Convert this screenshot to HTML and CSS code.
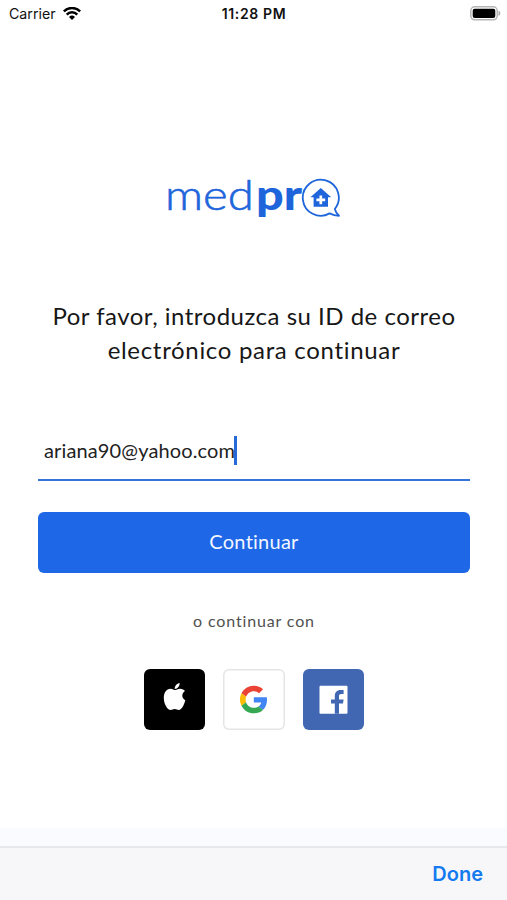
FILE: index.html
```html
<!DOCTYPE html>
<html lang="es">
<head>
<meta charset="utf-8">
<title>medpro</title>
<link rel="stylesheet" href="styles.css">
</head>
<body>
<div class="screen">
  <header class="status">
    <div class="carrier"><span>Carrier</span>
      <svg class="wifi" viewBox="0 0 18 13"><g fill="none" stroke="#000" stroke-width="2.4"><path d="M.8 4.4A11.5 11.5 0 0 1 17.2 4.4"/><path d="M3.7 7.6A7.2 7.2 0 0 1 14.3 7.6"/></g><path d="M6 10A4.3 4.3 0 0 1 12 10L9 13Z"/></svg>
    </div>
    <time class="clock">11:28 PM</time>
    <svg class="battery" viewBox="0 0 31 15"><rect x=".8" y=".8" width="26.4" height="13" rx="4" fill="#fff" stroke="#b5b5b5" stroke-width="1.5"/><rect x="2.7" y="2.7" width="22.6" height="9.2" rx="2"/><path d="M29 5.2Q30.8 7.3 29 9.4Z" fill="#aaa" stroke="#aaa"/></svg>
  </header>
  <main class="login">
    <div class="logo">
      <span class="med">med</span><span class="pr">pr</span>
      <svg class="bubble" viewBox="0 0 40 40"><path d="M33.8 31A18 18 0 1 0 28.6 35.4Q33 37.7 38 37.8Q35 35.3 33.8 31Z" fill="#fff" stroke="#1e65db" stroke-width="1.8" stroke-linejoin="round"/><path d="M19.8 10L30.2 19.3H27V28.8H12.6V19.3H9.4Z" fill="#1e65db"/><path d="M19.8 17.4V26.2M15.4 21.8H24.2" stroke="#fff" stroke-width="2.7"/></svg>
    </div>
    <h1 class="title"><span class="line-one">Por favor, introduzca su ID de correo</span><br><span class="line-two">electrónico para continuar</span></h1>
    <div class="field"><span class="email">ariana90@yahoo.com</span><i class="caret"></i></div>
    <button class="submit">Continuar</button>
    <p class="or">o continuar con</p>
    <div class="social">
      <button class="tile apple" aria-label="Apple"><svg viewBox="0 0 61 61"><path fill="#fff" d="M35.6 14C36 16.8 33.6 19.9 30.7 20C30.4 17.1 33 14.4 35.6 14ZM31 21.1C32.2 21.1 33.8 19.6 36.2 19.7C38.2 19.8 40 20.6 40.9 22C37.4 24.4 37.4 29.2 41.3 31.2C40.2 35.5 37.8 41 34.8 41C33.2 41 32.7 40 30.8 40C28.8 40 28.2 41 26.8 41C23.2 41 19.8 34.6 19.8 28.7C19.8 22.8 23.3 19.7 26.6 19.7C28.6 19.7 30 21.1 31 21.1Z"/></svg></button>
      <button class="tile google" aria-label="Google"><svg viewBox="0 0 61 61"><g transform="translate(17 16.7) scale(.575)"><path fill="#EA4335" d="M24 9.5c3.54 0 6.71 1.22 9.21 3.6l6.85-6.85C35.9 2.38 30.47 0 24 0 14.62 0 6.51 5.38 2.56 13.22l7.98 6.19C12.43 13.72 17.74 9.5 24 9.5z"/><path fill="#4285F4" d="M46.98 24.55c0-1.57-.15-3.09-.38-4.55H24v9.02h12.94c-.58 2.96-2.26 5.48-4.78 7.18l7.73 6c4.51-4.18 7.09-10.36 7.09-17.65z"/><path fill="#FBBC05" d="M10.53 28.59c-.48-1.45-.76-2.99-.76-4.59s.27-3.14.76-4.59l-7.98-6.19C.92 16.46 0 20.12 0 24c0 3.88.92 7.54 2.56 10.78l7.97-6.19z"/><path fill="#34A853" d="M24 48c6.48 0 11.93-2.13 15.89-5.81l-7.73-6c-2.15 1.45-4.92 2.3-8.16 2.3-6.26 0-11.57-4.22-13.47-9.91l-7.98 6.19C6.51 42.62 14.62 48 24 48z"/></g></svg></button>
      <button class="tile facebook" aria-label="Facebook"><svg viewBox="0 0 61 61"><rect x="16.5" y="16.7" width="28" height="28" rx="1" fill="#fff"/><path fill="#4267b2" d="M31.8 44.7V34.6H28V30.4H31.8V27.2C31.8 23.4 33.8 21.1 37.6 21.1H40.6V25H38.4C36.6 25 36 25.8 36 27.4V30.4H40.6L40 34.6H36V44.7Z"/></svg></button>
    </div>
  </main>
  <div class="haze"></div>
  <footer class="toolbar"><button class="done">Done</button></footer>
</div>
</body>
</html>
```
FILE: styles.css
```css
* { box-sizing: border-box; }
body { margin: 0; background: #fff; }
button { border: 0; padding: 0; background: none; font: inherit; }
.screen { width: 507px; height: 900px; display: flex; flex-direction: column; overflow: hidden; font-family: Lato, sans-serif; }
.status { height: 28px; padding: 1px 6px 1px 9px; display: grid; grid-template-columns: 1fr auto 1fr; align-items: center; font: 14px/26px Inter, sans-serif; color: #111; }
.carrier { display: flex; align-items: center; gap: 7px; font-size: 14.2px; }
.wifi { width: 18px; height: 13px; margin-top: -2px; }
.clock { font-weight: 600; font-size: 14px; letter-spacing: .65px; margin-right: 2px; }
.battery { width: 31px; height: 15px; justify-self: end; margin-top: -1px; }
.login { flex: 1; padding: 0 37px 0 38px; }
.logo { height: 50px; margin-top: 142px; display: flex; align-items: baseline; padding-left: 127px; color: #1e65db; font-size: 41.5px; line-height: 48px; }
.med { font-weight: 300; width: 91px; transform: scaleX(1.14); transform-origin: left; -webkit-text-stroke: .6px #1e65db; }
.pr { font-weight: 900; width: 45px; transform: scaleX(1.17); transform-origin: left; }
.bubble { width: 40px; height: 40px; align-self: flex-start; margin-top: 8px; }
.title { margin: 79px 0 0; font-size: 24px; line-height: 33.5px; font-weight: 400; text-align: center; color: #171717; white-space: nowrap; }
.line-one { letter-spacing: .5px; }
.line-two { letter-spacing: .68px; }
.field { height: 62px; margin-top: 53px; padding: 1px 0 0 6px; border-bottom: 2px solid #3474d9; display: flex; align-items: center; font-size: 20px; color: #222; }
.email { letter-spacing: .13px; }
.caret { width: 2.5px; height: 29px; margin: 1px 0 0 -1px; background: #2869d8; }
.submit { display: block; width: 100%; height: 61px; padding-bottom: 4px; margin-top: 31px; border-radius: 6px; background: #1e67e7; color: #f3f7ff; font-size: 20px; letter-spacing: .25px; }
.or { margin: 36px 0 0; text-align: center; font-size: 16px; line-height: 24px; letter-spacing: .85px; color: #505050; }
.social { display: flex; justify-content: center; gap: 18px; margin-top: 36px; }
.tile { width: 61.5px; height: 61px; border-radius: 6px; overflow: hidden; }
.tile svg { display: block; width: 61px; height: 61px; }
.apple { background: #000; }
.google { box-shadow: inset 0 0 0 1.5px #e5e5e5; }
.facebook { background: #4267b2; }
.haze { height: 18px; background: #f9fbff; }
.toolbar { height: 54px; border-top: 2px solid #e6e8eb; background: #f7f7f9; display: flex; justify-content: flex-end; align-items: center; padding: 0 24px 0 0; }
.done { color: #147af0; font: 600 20px/24px Inter, sans-serif; }
```
